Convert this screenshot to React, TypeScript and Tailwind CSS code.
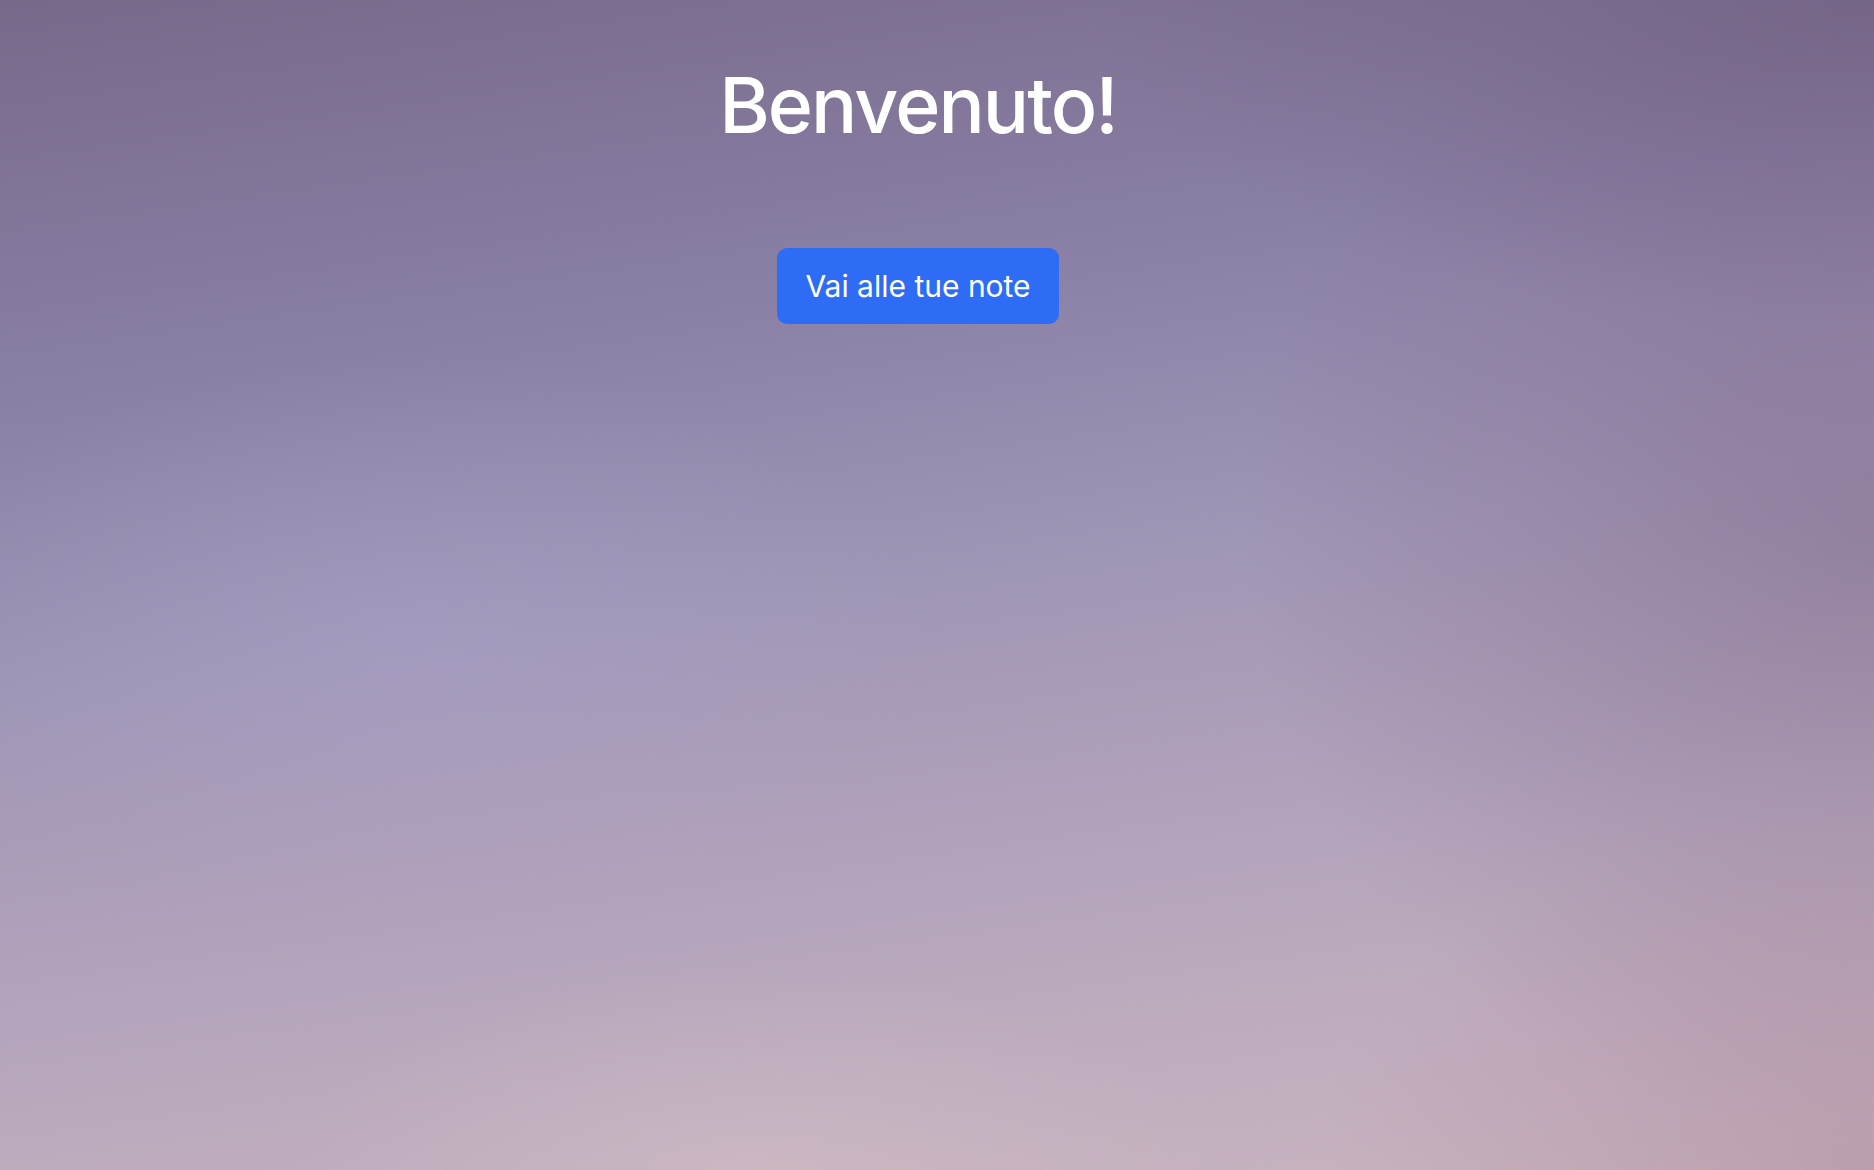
import React from 'react';

export default function App() {
  return (
    <div className="relative h-[1170px] w-full overflow-hidden bg-[radial-gradient(ellipse_40%_40%_at_100%_100%,rgba(160,115,140,0.35),transparent_75%),radial-gradient(ellipse_45%_70%_at_100%_45%,rgba(110,80,115,0.35),transparent_75%),radial-gradient(ellipse_60%_40%_at_100%_0%,rgba(90,70,100,0.35),transparent_70%),radial-gradient(ellipse_40%_35%_at_22%_55%,rgba(175,165,205,0.35),transparent_70%),radial-gradient(ellipse_35%_25%_at_40%_100%,rgba(215,195,200,0.4),transparent_70%),linear-gradient(172deg,#77698a_0%,#8a80a5_28%,#a096b6_50%,#b5a5bc_72%,#cbb6c0_100%)] font-['Inter','Liberation_Sans',Arial,sans-serif]">
      <main className="flex flex-col items-center pr-[38px] pt-[67px]">
        <h1 className="text-[77px] leading-none font-medium tracking-[-0.025em] text-white">Benvenuto!</h1>
        <button className="mt-[104px] h-[76px] rounded-[10px] bg-[#2f6cf5] px-[28px] text-[30px] text-white">
          Vai alle tue note
        </button>
      </main>
    </div>
  );
}
